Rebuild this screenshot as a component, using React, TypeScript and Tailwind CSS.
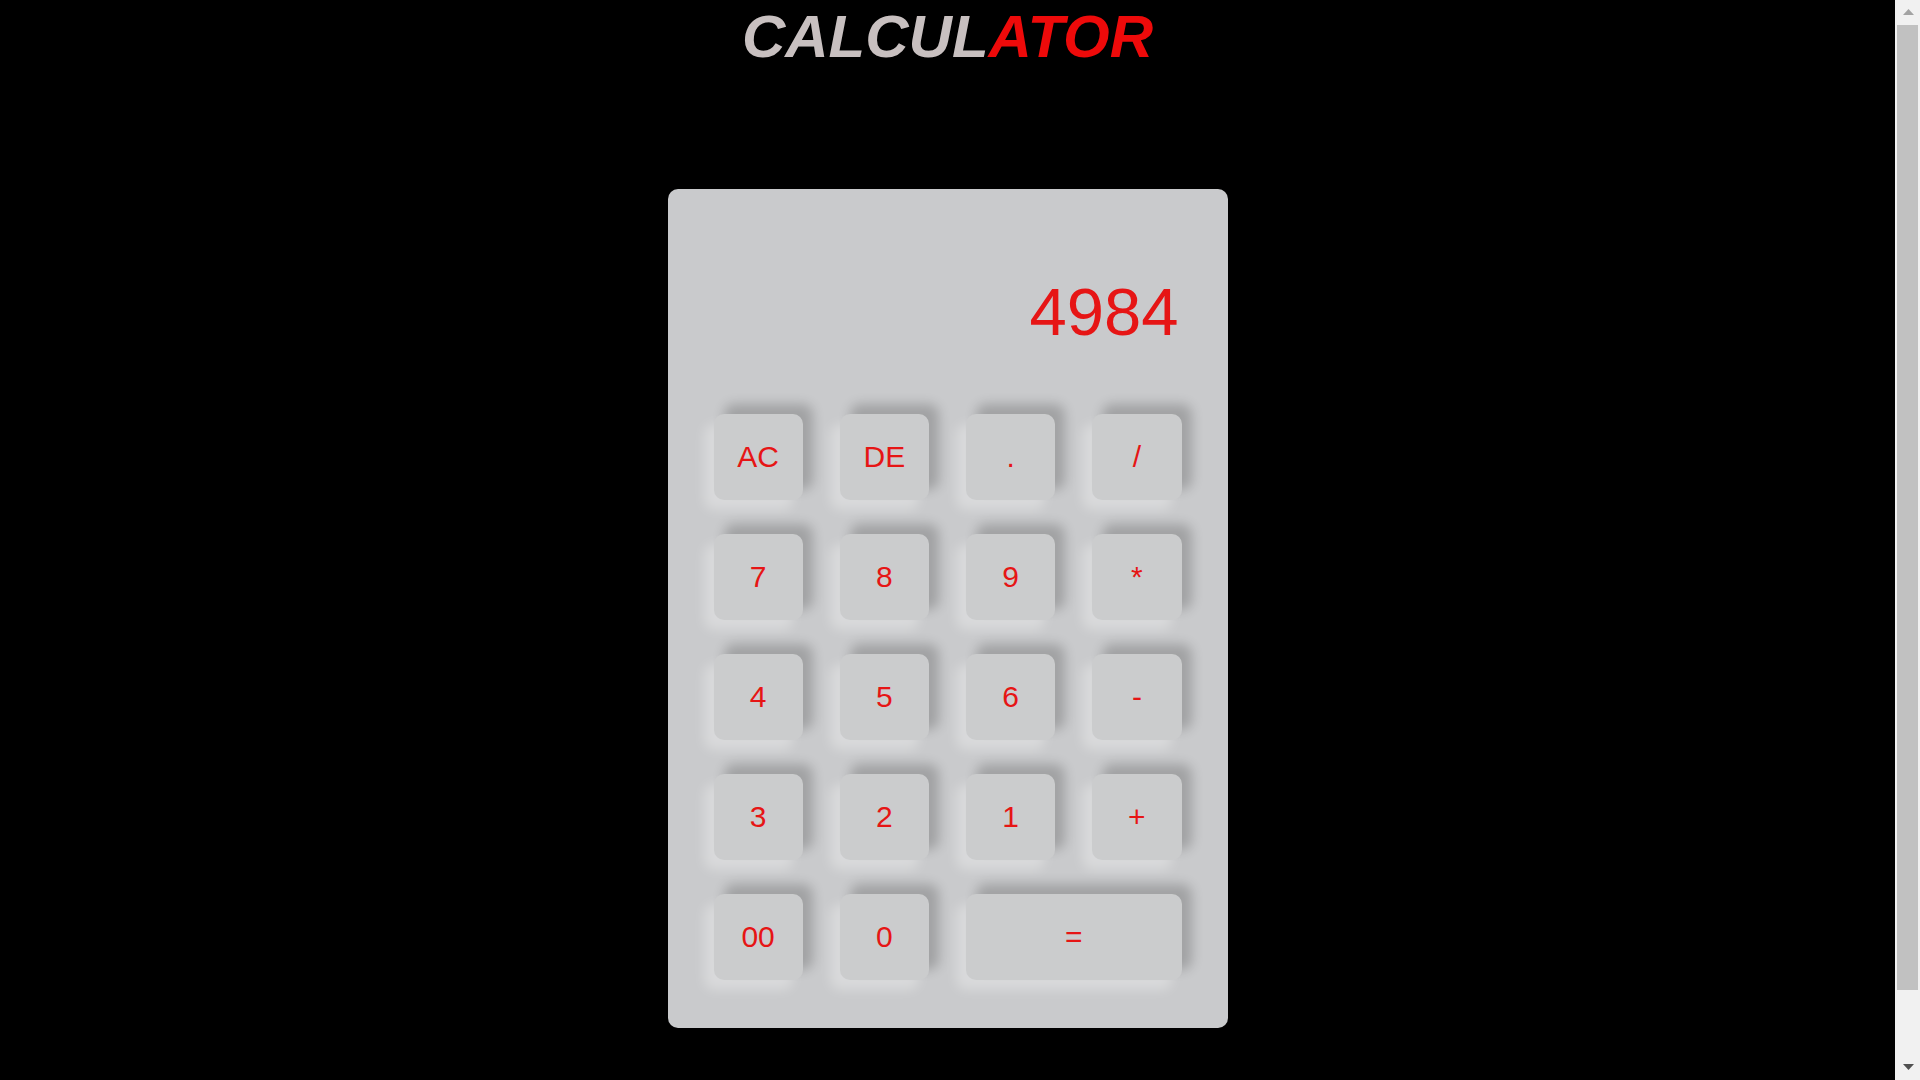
const keys: { label: string; wide?: boolean }[] = [
  { label: "AC" },
  { label: "DE" },
  { label: "." },
  { label: "/" },
  { label: "7" },
  { label: "8" },
  { label: "9" },
  { label: "*" },
  { label: "4" },
  { label: "5" },
  { label: "6" },
  { label: "-" },
  { label: "3" },
  { label: "2" },
  { label: "1" },
  { label: "+" },
  { label: "00" },
  { label: "0" },
  { label: "=", wide: true }
]

function Key({ label, wide }: { label: string; wide?: boolean }) {
  return (
    <button
      className={
        "flex h-[86px] items-center justify-center rounded-[10px] bg-[#cbcccd] text-[30px] text-[#e61515] shadow-[10px_-10px_12px_rgba(0,0,0,0.2),-10px_10px_12px_rgba(255,255,255,0.3)] " +
        (wide ? "col-span-2" : "")
      }
    >
      {label}
    </button>
  )
}

// page scrollbar as it shows in the shot
function ScrollBar() {
  return (
    <div className="flex w-[25px] shrink-0 flex-col bg-[#f1f1f1]">
      <div className="flex h-[20px] items-center justify-center pl-[2px] pt-[4px]">
        <svg width="11" height="6" viewBox="0 0 11 6">
          <path d="M5.5 0 L11 6 L0 6 Z" fill="#a3a3a3" />
        </svg>
      </div>
      <div className="mx-[2px] mt-[5px] h-[965px] bg-[#c1c1c1]" />
      <div className="flex flex-1 items-end justify-center pb-[10px] pl-[2px]">
        <svg width="11" height="6" viewBox="0 0 11 6">
          <path d="M0 0 L11 0 L5.5 6 Z" fill="#505050" />
        </svg>
      </div>
    </div>
  )
}

export default function App() {
  return (
    <div className="flex h-screen bg-black font-['Liberation_Sans',Arial,sans-serif] leading-[normal]">
      <main className="flex-1 overflow-hidden">
        <h1 className="pt-[2px] text-center text-[60px] font-bold italic">
          <span className="text-[#c8c0c0]">CALCUL</span>
          <span className="text-[#ee0a0a]">ATOR</span>
        </h1>

        <div className="mx-auto mt-[118px] w-[560px] rounded-[10px] bg-[#c9cacc] px-[46px] pb-[48px]">
          <div className="pb-[64px] pr-[3px] pt-[84px] text-right text-[67px] text-[#e61515]">
            4984
          </div>
          <div className="grid grid-cols-4 gap-x-[37px] gap-y-[34px]">
            {keys.map((k) => (
              <Key key={k.label} {...k} />
            ))}
          </div>
        </div>
      </main>
      <ScrollBar />
    </div>
  )
}
